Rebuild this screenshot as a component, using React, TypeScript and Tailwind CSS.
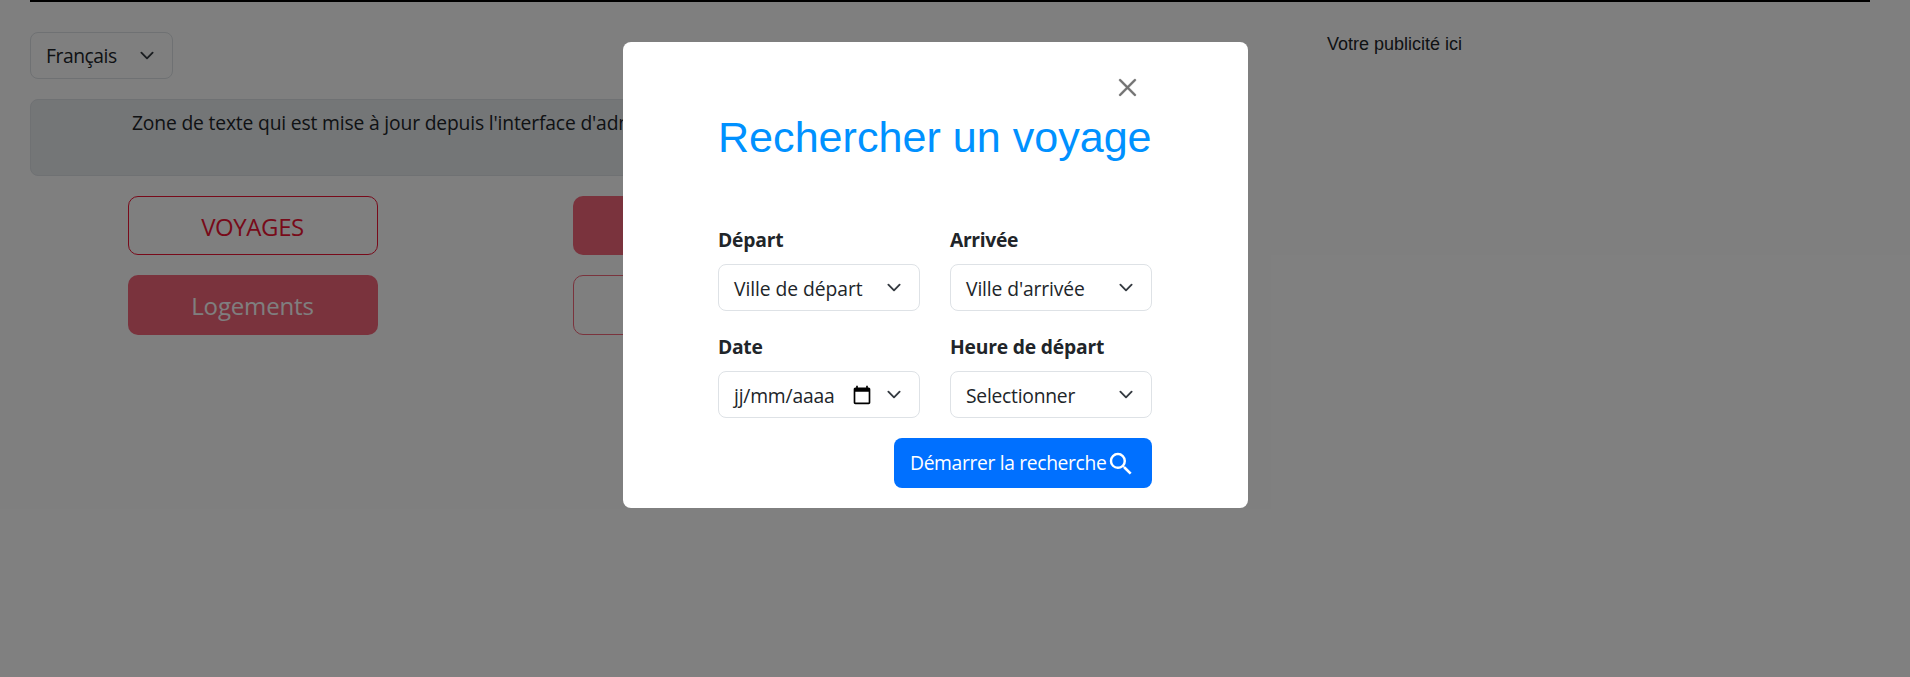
import React from "react";

function Chevron() {
  return (
    <svg className="h-[15px] w-5 shrink-0" viewBox="0 0 16 16" fill="none">
      <path
        d="m2 5 6 6 6-6"
        stroke="#343a40"
        strokeWidth="2"
        strokeLinecap="round"
        strokeLinejoin="round"
      />
    </svg>
  );
}

function CalendarIcon() {
  return (
    <svg className="h-5 w-5 shrink-0" viewBox="0 0 24 24" fill="#000">
      <path d="M20 3h-1V1h-2v2H7V1H5v2H4c-1.1 0-2 .9-2 2v16c0 1.1.9 2 2 2h16c1.1 0 2-.9 2-2V5c0-1.1-.9-2-2-2zm0 18H4V8h16v13z" />
    </svg>
  );
}

type FieldProps = {
  label: string;
  value: string;
  labelClass: string;
  valueClass: string;
  date?: boolean;
};

function Field({ label, value, labelClass, valueClass, date }: FieldProps) {
  return (
    <div className="w-[202px]">
      <div className={`mb-[9px] h-[30px] whitespace-nowrap text-[19.3px] leading-[30px] font-bold ${labelClass}`}>
        {label}
      </div>
      <div className="flex h-[47px] items-center rounded-[8px] border border-[#dee2e6] bg-white pr-[15px] pl-[15px]">
        <span className={`flex-1 pt-[4px] whitespace-nowrap ${valueClass}`}>{value}</span>
        {date && (
          <span className="mr-[12px] flex">
            <CalendarIcon />
          </span>
        )}
        <Chevron />
      </div>
    </div>
  );
}

function Page() {
  return (
    <div className="px-[30px]">
      <div className="h-[2px] w-[1840px] bg-black" />
      <div className="flex pt-[30px]">
        <main className="w-[1227px]">
          <div className="flex h-[47px] w-[143px] items-center rounded-[8px] border border-[#dee2e6] pr-[15px] pl-[15px]">
            <span className="flex-1 pt-[2px] tracking-[-0.45px]">Français</span>
            <Chevron />
          </div>
          <div className="mt-5 h-[77px] w-[890px] overflow-hidden rounded-[8px] border border-[#dee2e6] bg-[#e9ecef] pt-[8px] pl-[101px] leading-[30px] tracking-[-0.17px] whitespace-nowrap">
            Zone de texte qui est mise à jour depuis l'interface d'administration
          </div>
          <div className="mt-5 grid w-[890px] grid-cols-2 justify-items-center gap-y-5 text-[24px]">
            <div className="flex h-[59px] w-[250px] items-center justify-center rounded-[10px] border border-[#f11535] text-[#f11535]">
              <span className="pt-[2px] tracking-[-0.4px]">VOYAGES</span>
            </div>
            <div className="flex h-[59px] w-[250px] items-center justify-center rounded-[10px] bg-[#f11535] text-white opacity-65">
              Colis
            </div>
            <div className="flex h-[60px] w-[250px] items-center justify-center rounded-[10px] bg-[#f11535] text-white opacity-65">
              <span className="pt-[2px] tracking-[-0.15px]">Logements</span>
            </div>
            <div className="flex h-[60px] w-[250px] items-center justify-center rounded-[10px] border border-[#f11535] text-[#f11535] opacity-65">
              Autres
            </div>
          </div>
        </main>
        <aside className="pl-[70px] font-['Liberation_Sans',Arial,sans-serif] text-[18px] leading-[24px]">
          Votre publicité ici
        </aside>
      </div>
    </div>
  );
}

function SearchModal() {
  return (
    <div className="absolute inset-0 bg-black/50 pt-[42px] pl-[623px]">
      <div className="h-[466px] w-[625px] rounded-[8px] bg-white pt-[35px] pr-[96px] pl-[95px]">
        <div className="flex h-5 items-center justify-end pr-[16.5px]">
          <svg
            className="h-[17px] w-[17px] overflow-visible opacity-55"
            viewBox="0 0 16 16"
            fill="#000"
            stroke="#000"
            strokeWidth="0.3"
          >
            <path d="M.293.293a1 1 0 0 1 1.414 0L8 6.586 14.293.293a1 1 0 1 1 1.414 1.414L9.414 8l6.293 6.293a1 1 0 0 1-1.414 1.414L8 9.414l-6.293 6.293a1 1 0 0 1-1.414-1.414L6.586 8 .293 1.707a1 1 0 0 1 0-1.414z" />
          </svg>
        </div>
        <h1 className="mt-[15px] h-[50px] font-['Liberation_Sans',Arial,sans-serif] text-[43.1px] leading-[50px] whitespace-nowrap text-[#0091ff]">
          Rechercher un voyage
        </h1>
        <div className="mt-[63px] grid grid-cols-2 gap-x-[30px] gap-y-[21px]">
          <Field label="Départ" value="Ville de départ" labelClass="tracking-[-0.2px]" valueClass="tracking-[-0.06px]" />
          <Field label="Arrivée" value="Ville d'arrivée" labelClass="tracking-[-0.35px]" valueClass="tracking-[-0.12px]" />
          <Field label="Date" value="jj/mm/aaaa" labelClass="tracking-[-0.3px]" valueClass="tracking-[-0.2px]" date />
          <Field label="Heure de départ" value="Selectionner" labelClass="tracking-[-0.2px]" valueClass="tracking-[-0.25px]" />
        </div>
        <div className="mt-5 flex justify-end">
          <button className="flex h-[50px] w-[258px] items-center rounded-[8px] bg-[#0070ff] pl-[16px] whitespace-nowrap text-white">
            <span className="w-[196px] pt-px text-left tracking-[-0.35px]">Démarrer la recherche</span>
            <svg className="mt-[2px] h-[30px] w-[30px] shrink-0" viewBox="0 0 24 24" fill="#fff">
              <path d="M15.5 14h-.79l-.28-.27A6.471 6.471 0 0 0 16 9.5 6.5 6.5 0 1 0 9.5 16c1.61 0 3.09-.59 4.23-1.57l.27.28v.79l5 4.99L20.49 19l-4.99-5zm-6 0C7.01 14 5 11.99 5 9.5S7.01 5 9.5 5 14 7.01 14 9.5 11.99 14 9.5 14z" />
            </svg>
          </button>
        </div>
      </div>
    </div>
  );
}

export default function App() {
  return (
    <div className="relative h-[677px] w-full overflow-hidden bg-white font-['Segoe_UI','Open_Sans','Noto_Sans',sans-serif] text-[19.3px] text-[#212529]">
      <Page />
      <SearchModal />
    </div>
  );
}
